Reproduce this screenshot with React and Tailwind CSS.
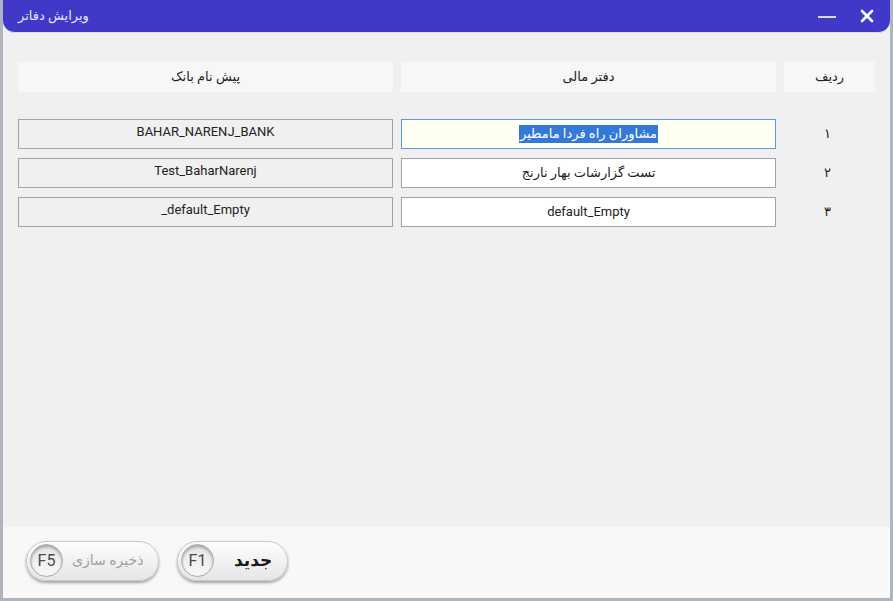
import React from 'react';

// ─── Data ─────────────────────────────────────────────────────────────────────
const ROWS = [
  { idx: '۱', ledger: 'مشاوران راه فردا مامطیر', prefix: 'BAHAR_NARENJ_BANK', focused: true },
  { idx: '۲', ledger: 'تست گزارشات بهار نارنج', prefix: 'Test_BaharNarenj' },
  { idx: '۳', ledger: 'default_Empty', prefix: '_default_Empty' },
];

const FONT = { fontFamily: 'Roboto, "DejaVu Sans", sans-serif' };

// ─── Footer pill button ──────────────────────────────────────────────────────
function PillButton({ label, fkey, disabled, wide }) {
  return (
    <button
      className={
        'h-[40px] rounded-full border border-[#c9c9c9] bg-gradient-to-b from-[#fdfdfd] to-[#e6e6e6] shadow-[0_2px_3px_rgba(0,0,0,0.35)] flex items-center pl-[3px] whitespace-nowrap ' +
        (wide ? 'w-[133px] gap-[9px]' : 'w-[111px] gap-[20px]')
      }
    >
      <span className="w-[33px] h-[33px] shrink-0 rounded-full border border-[#a9a9a9] bg-gradient-to-b from-[#e6e6e6] to-[#f8f8f8] shadow-[inset_0_2px_3px_rgba(0,0,0,0.3)] flex items-center justify-center text-[16px] text-[#4a4a4a]">
        {fkey}
      </span>
      <span
        dir="rtl"
        className={disabled ? 'text-[14px] text-[#a0a0a0]' : 'text-[17px] font-bold text-[#1a1a1a]'}
      >
        {label}
      </span>
    </button>
  );
}

// ─── Component ────────────────────────────────────────────────────────────────
export default function App() {
  return (
    <div className="w-[893px] h-[601px] bg-[#aeb5bd] overflow-hidden" style={FONT}>
      <div className="ml-[3px] w-[887px] h-[598px] bg-[#f0f0f0] flex flex-col">
        {/* Title bar */}
        <div className="h-[33px] bg-[#4038c9] rounded-b-[12px] border-b border-[#dcdcf2] flex items-center justify-between pl-[15px] pr-[16px] shrink-0">
          <span dir="rtl" className="text-[13px] text-[#e6e6fa]">ویرایش دفاتر</span>
          <div className="flex items-center gap-[24px]">
            <span className="w-[18px] h-[2px] bg-[#d9d9f5] mt-[2px]" />
            <svg width="14" height="14" viewBox="0 0 14 14" className="mb-[1px]">
              <path d="M2 2 L12 12 M12 2 L2 12" stroke="#ffffff" strokeWidth="2.6" strokeLinecap="round" />
            </svg>
          </div>
        </div>

        {/* Grid */}
        <div dir="rtl" className="flex-1 px-[15px] pt-[29px]">
          <div className="grid grid-cols-[91px_375px_375px] gap-x-[8px] text-[13px] text-[#222]">
            <div className="h-[30px] bg-[#f7f7f7] flex items-center justify-center">ردیف</div>
            <div className="h-[30px] bg-[#f7f7f7] flex items-center justify-center">دفتر مالی</div>
            <div className="h-[30px] bg-[#f7f7f7] flex items-center justify-center">پیش نام بانک</div>
          </div>

          <div className="mt-[27px] flex flex-col gap-[9px]">
            {ROWS.map(r => (
              <div key={r.idx} className="grid grid-cols-[91px_375px_375px] gap-x-[8px] text-[13px] text-[#222]">
                <div className="h-[30px] flex items-center justify-center pr-[4px]">{r.idx}</div>
                <div
                  className={
                    'h-[30px] flex items-center justify-center ' +
                    (r.focused
                      ? 'border border-[#5b9bd9] bg-[#fffff3]'
                      : 'border border-[#a3a3a3] bg-white')
                  }
                >
                  {r.focused ? (
                    <span className="bg-[#3479d8] text-white px-[1px] leading-[18px]">{r.ledger}</span>
                  ) : (
                    <span>{r.ledger}</span>
                  )}
                </div>
                <div dir="ltr" className="h-[30px] flex items-center justify-center border border-[#a3a3a3] bg-[#f0f0f0] pb-[4px]">
                  {r.prefix}
                </div>
              </div>
            ))}
          </div>
        </div>

        {/* Footer */}
        <div className="h-[71px] bg-[#f8f8f8] flex items-center gap-[18px] pl-[23px] pb-[4px] shrink-0">
          <PillButton label="ذخیره سازی" fkey="F5" disabled wide />
          <PillButton label="جدید" fkey="F1" />
        </div>
      </div>
    </div>
  );
}
